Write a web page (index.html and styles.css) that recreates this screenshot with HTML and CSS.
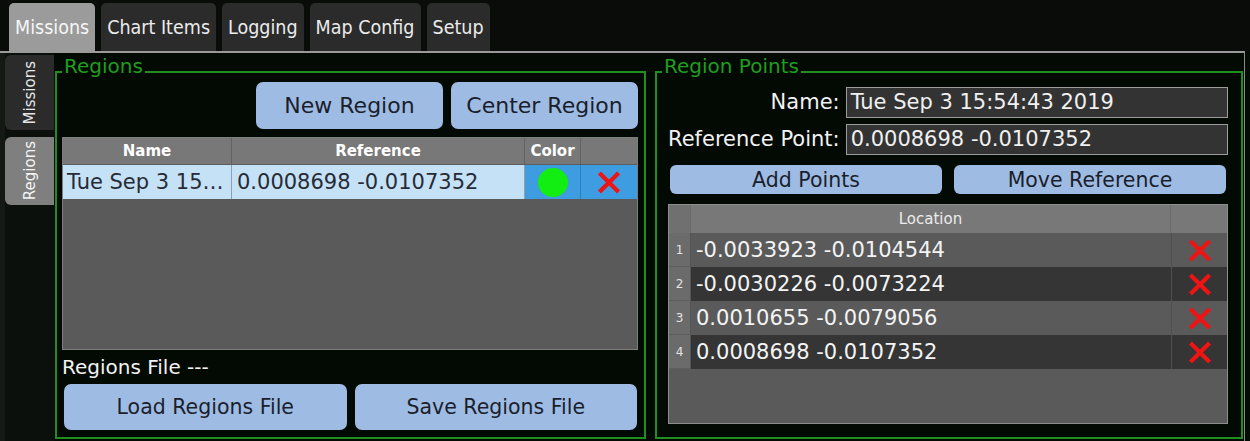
FILE: index.html
```html
<!DOCTYPE html>
<html>
<head>
<meta charset="utf-8">
<title>Regions</title>
<link rel="stylesheet" href="styles.css">
</head>
<body>
<div class="app">
  <nav class="tabbar">
    <div class="tab active">Missions</div>
    <div class="tab">Chart Items</div>
    <div class="tab">Logging</div>
    <div class="tab">Map Config</div>
    <div class="tab">Setup</div>
  </nav>
  <div class="pane">
    <div class="sidetabs">
      <div class="stab"><span>Missions</span></div>
      <div class="stab active"><span>Regions</span></div>
    </div>
    <div class="page">
      <fieldset class="group regions">
        <legend>Regions</legend>
        <div class="btnrow top">
          <button class="btn big">New Region</button>
          <button class="btn big">Center Region</button>
        </div>
        <div class="rtable">
          <div class="rhead">
            <div class="c name">Name</div>
            <div class="c ref">Reference</div>
            <div class="c color">Color</div>
            <div class="c del"></div>
          </div>
          <div class="rrow sel">
            <div class="c name">Tue Sep 3 15…</div>
            <div class="c ref">0.0008698 -0.0107352</div>
            <div class="c color"><span class="dot"></span></div>
            <div class="c del"><svg class="x" viewBox="0 0 24 24"><path d="M2 2 L22 22 M22 2 L2 22"/></svg></div>
          </div>
        </div>
        <div class="filelabel">Regions File ---</div>
        <div class="btnrow bottom">
          <button class="btn wide">Load Regions File</button>
          <button class="btn wide">Save Regions File</button>
        </div>
      </fieldset>
      <fieldset class="group points">
        <legend>Region Points</legend>
        <div class="form">
          <label>Name:</label>
          <div class="field">Tue Sep 3 15:54:43 2019</div>
          <label>Reference Point:</label>
          <div class="field">0.0008698 -0.0107352</div>
        </div>
        <div class="btnrow pts">
          <button class="btn small">Add Points</button>
          <button class="btn small">Move Reference</button>
        </div>
        <div class="ptable">
          <div class="phead">
            <div class="num"></div>
            <div class="loc">Location</div>
            <div class="pdel"></div>
          </div>
          <div class="prow">
            <div class="num">1</div>
            <div class="loc">-0.0033923 -0.0104544</div>
            <div class="pdel"><svg class="x" viewBox="0 0 24 24"><path d="M2 2 L22 22 M22 2 L2 22"/></svg></div>
          </div>
          <div class="prow dark">
            <div class="num">2</div>
            <div class="loc">-0.0030226 -0.0073224</div>
            <div class="pdel"><svg class="x" viewBox="0 0 24 24"><path d="M2 2 L22 22 M22 2 L2 22"/></svg></div>
          </div>
          <div class="prow">
            <div class="num">3</div>
            <div class="loc">0.0010655 -0.0079056</div>
            <div class="pdel"><svg class="x" viewBox="0 0 24 24"><path d="M2 2 L22 22 M22 2 L2 22"/></svg></div>
          </div>
          <div class="prow dark">
            <div class="num">4</div>
            <div class="loc">0.0008698 -0.0107352</div>
            <div class="pdel"><svg class="x" viewBox="0 0 24 24"><path d="M2 2 L22 22 M22 2 L2 22"/></svg></div>
          </div>
        </div>
      </fieldset>
    </div>
  </div>
</div>
</body>
</html>
```

FILE: styles.css
```css
* { box-sizing: border-box; }

html, body {
  margin: 0;
  background: #050b05;
}

body {
  font-family: "DejaVu Sans", "Liberation Sans", sans-serif;
  color: #f0f0f0;
}

.app {
  width: 1250px;
  height: 441px;
  display: flex;
  flex-direction: column;
  overflow: hidden;
}

/* top tab bar */
.tabbar {
  display: flex;
  gap: 6px;
  height: 51px;
  padding: 3px 0 0 9px;
  background: #090c09;
}

.tab {
  display: flex;
  align-items: center;
  padding: 0 6px;
  background: #2b2b2b;
  color: #ececec;
  border-radius: 5px 5px 0 0;
  font-family: "DejaVu Sans Condensed", "DejaVu Sans", sans-serif;
  font-stretch: condensed;
  font-size: 19.5px;
}

.tab.active {
  background: #9b9b9b;
  color: #f6f6f6;
}

/* pane */
.pane {
  flex: 1;
  display: flex;
  margin-right: 5px;
  border-top: 2px solid #9a9a9a;
  border-right: 1px solid #8a8a8a;
  min-height: 0;
}

.sidetabs {
  width: 54px;
  display: flex;
  flex-direction: column;
  gap: 7px;
  padding-top: 2px;
  background: #0c100c;
  border-left: 5px solid #151915;
}

.stab {
  height: 75px;
  display: flex;
  align-items: center;
  justify-content: center;
  background: #2b2b2b;
  border-radius: 6px 0 0 6px;
  color: #e6e6e6;
}

.stab span {
  writing-mode: vertical-rl;
  transform: rotate(180deg);
  font-size: 15px;
}

.stab.active {
  height: 68px;
  background: #7f7f7f;
  color: #f4f4f4;
}

.page {
  flex: 1;
  display: grid;
  grid-template-columns: 591px 1fr;
  column-gap: 9px;
  padding: 13px 1px 2px 1px;
  background: #030903;
  min-width: 0;
}

/* group boxes */
.group {
  margin: 0;
  min-width: 0;
  border: 2px solid #1f8f1f;
  display: flex;
  flex-direction: column;
}

.group legend {
  margin-left: 1px;
  padding: 0 2px 12px;
  line-height: 0;
  font-size: 20px;
  color: #1f9d1f;
}

.regions {
  padding: 4px 6px 7px 4px;
}

.regions > .btnrow, .regions > .rtable, .regions > .filelabel {
  margin-left: 1px;
}

.points {
  padding: 9px 13px 13px 4px;
}

.points > .form, .points > .btnrow, .points > .ptable {
  margin-left: 7px;
}

/* buttons */
.btnrow {
  display: flex;
}

.btn {
  border: none;
  border-radius: 7px;
  background: #9ebce3;
  color: #1b1e2c;
  font-family: "DejaVu Sans", sans-serif;
  padding: 0;
}

.btnrow.top {
  justify-content: flex-end;
  gap: 8px;
  margin-bottom: 8px;
}

.btn.big {
  width: 187px;
  height: 47px;
  font-size: 22px;
}

.btnrow.bottom {
  gap: 8px;
  padding: 0 1px 0 2px;
}

.btn.wide {
  flex: 1;
  height: 46px;
  font-size: 20.5px;
}

.btnrow.pts {
  gap: 12px;
  padding: 0 2px;
  margin-top: 10px;
  margin-bottom: 10px;
}

.btn.small {
  flex: 1;
  height: 29px;
  font-size: 20.5px;
  border-radius: 6px;
}

/* regions table */
.rtable {
  flex: 1;
  display: flex;
  flex-direction: column;
  background: #5a5a5a;
  border: 1px solid #7e7e7e;
}

.rhead, .rrow {
  display: flex;
}

.rhead {
  height: 27px;
  background: #787878;
  border-bottom: 1px solid #5c5c5c;
}

.rhead .c {
  font-weight: bold;
  font-size: 15px;
  line-height: 26px;
  text-align: center;
  color: #ffffff;
  border-right: 1px solid #626262;
}

.c.name { width: 169px; }
.c.ref { width: 293px; }
.c.color { width: 56px; }
.c.del { flex: 1; }
.rhead .c.del { border-right: none; }

.rrow {
  height: 34px;
}

.rrow .c {
  font-size: 21px;
  line-height: 34px;
  white-space: nowrap;
  overflow: hidden;
}

.sel .name, .sel .ref {
  background: #c5e1f6;
  color: #272b35;
  border-right: 1px solid #8aa2b4;
}

.sel .name { padding-left: 4px; }
.sel .ref { padding-left: 5px; }

.sel .color, .sel .del {
  background: #3d9de0;
  display: flex;
  align-items: center;
  justify-content: center;
}

.sel .color { border-right: 1px solid #2f7fb8; }

.dot {
  width: 30px;
  height: 29px;
  border-radius: 50%;
  background: #12ee12;
}

.x {
  width: 24px;
  height: 23px;
}

.x path {
  fill: none;
  stroke: #ee1414;
  stroke-width: 4.4;
}

.filelabel {
  height: 34px;
  line-height: 34px;
  font-size: 20px;
  color: #f2f2f2;
}

/* region points form */
.form {
  display: grid;
  grid-template-columns: auto 1fr;
  column-gap: 6px;
  row-gap: 6px;
}

.form label {
  text-align: right;
  font-size: 21px;
  line-height: 31px;
  color: #f2f2f2;
}

.field {
  height: 31px;
  line-height: 29px;
  padding-left: 4px;
  border: 1px solid #9c9c9c;
  background: #333333;
  font-size: 21px;
  color: #f0f0f0;
}

/* points table */
.ptable {
  flex: 1;
  display: flex;
  flex-direction: column;
  background: #5a5a5a;
  border: 1px solid #8e8e8e;
}

.phead, .prow {
  display: flex;
}

.phead {
  height: 28px;
  background: #787878;
}

.phead .loc {
  text-align: center;
  font-size: 15px;
  line-height: 28px;
  color: #ececec;
  border-right: 1px solid #6a6a6a;
}

.phead .num {
  background: #707070;
  border-right: 1px solid #6a6a6a;
}

.num {
  width: 22px;
}

.loc {
  flex: 1;
}

.pdel {
  width: 56px;
}

.prow {
  height: 34px;
}

.prow .num {
  display: flex;
  align-items: center;
  justify-content: center;
  background: #6b6b6b;
  border-right: 1px solid #555555;
  border-bottom: 1px solid #5e5e5e;
  font-size: 12px;
  color: #e4e4e4;
}

.prow .loc {
  padding-left: 5px;
  font-size: 21px;
  line-height: 34px;
  color: #f4f4f4;
}

.prow .pdel {
  display: flex;
  align-items: center;
  justify-content: center;
  border-left: 1px solid #505050;
}

.prow.dark .loc, .prow.dark .pdel {
  background: #353535;
}
```
